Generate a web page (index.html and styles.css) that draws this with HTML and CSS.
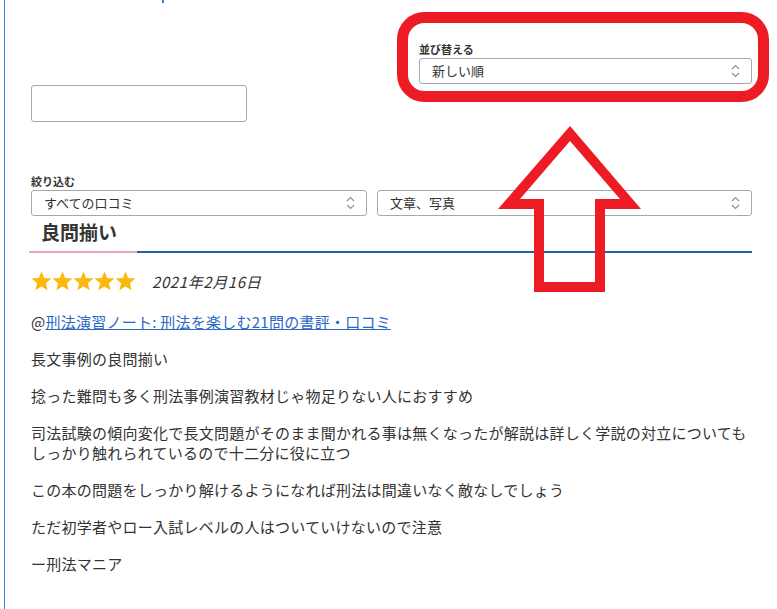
FILE: index.html
```html
<!DOCTYPE html>
<html lang="ja">
<head>
<meta charset="utf-8">
<title>口コミ</title>
<link rel="stylesheet" href="styles.css">
</head>
<body>
<div class="page">
  <span class="top-dot"></span>
  <div class="toolbar">
    <div class="search-col">
      <div class="search-box"></div>
    </div>
    <div class="sort-col">
      <div class="label">並び替える</div>
      <div class="select sort-select">
        <span>新しい順</span>
        <svg class="chev" width="9" height="14" viewBox="0 0 9 14"><path d="M1 5 L4.5 1.5 L8 5 M1 9 L4.5 12.5 L8 9" fill="none" stroke="#8d929c" stroke-width="1.2"/></svg>
      </div>
    </div>
  </div>

  <div class="filter">
    <div class="label">絞り込む</div>
    <div class="filter-row">
      <div class="select">
        <span>すべての口コミ</span>
        <svg class="chev" width="9" height="14" viewBox="0 0 9 14"><path d="M1 5 L4.5 1.5 L8 5 M1 9 L4.5 12.5 L8 9" fill="none" stroke="#8d929c" stroke-width="1.2"/></svg>
      </div>
      <div class="select">
        <span>文章、写真</span>
        <svg class="chev" width="9" height="14" viewBox="0 0 9 14"><path d="M1 5 L4.5 1.5 L8 5 M1 9 L4.5 12.5 L8 9" fill="none" stroke="#8d929c" stroke-width="1.2"/></svg>
      </div>
    </div>
  </div>

  <h2 class="review-title">良問揃い</h2>

  <div class="meta">
    <div class="stars">
      <svg width="21" height="20" viewBox="0 0 24 23"><polygon points="12,0.5 15.1,8.1 23.4,8.7 17,14 19.1,22.2 12,17.7 4.9,22.2 7,14 0.6,8.7 8.9,8.1" fill="#fbb80f"/></svg>
      <svg width="21" height="20" viewBox="0 0 24 23"><polygon points="12,0.5 15.1,8.1 23.4,8.7 17,14 19.1,22.2 12,17.7 4.9,22.2 7,14 0.6,8.7 8.9,8.1" fill="#fbb80f"/></svg>
      <svg width="21" height="20" viewBox="0 0 24 23"><polygon points="12,0.5 15.1,8.1 23.4,8.7 17,14 19.1,22.2 12,17.7 4.9,22.2 7,14 0.6,8.7 8.9,8.1" fill="#fbb80f"/></svg>
      <svg width="21" height="20" viewBox="0 0 24 23"><polygon points="12,0.5 15.1,8.1 23.4,8.7 17,14 19.1,22.2 12,17.7 4.9,22.2 7,14 0.6,8.7 8.9,8.1" fill="#fbb80f"/></svg>
      <svg width="21" height="20" viewBox="0 0 24 23"><polygon points="12,0.5 15.1,8.1 23.4,8.7 17,14 19.1,22.2 12,17.7 4.9,22.2 7,14 0.6,8.7 8.9,8.1" fill="#fbb80f"/></svg>
    </div>
    <span class="date">2021年2月16日</span>
  </div>

  <div class="review-body">
    <p>@<a href="#">刑法演習ノート: 刑法を楽しむ21問の書評・口コミ</a></p>
    <p>長文事例の良問揃い</p>
    <p>捻った難問も多く刑法事例演習教材じゃ物足りない人におすすめ</p>
    <p>司法試験の傾向変化で長文問題がそのまま聞かれる事は無くなったが解説は詳しく学説の対立についてもしっかり触れられているので十二分に役に立つ</p>
    <p>この本の問題をしっかり解けるようになれば刑法は間違いなく敵なしでしょう</p>
    <p>ただ初学者やロー入試レベルの人はついていけないので注意</p>
    <p>ー刑法マニア</p>
  </div>

  <svg class="annotation" width="777" height="609" viewBox="0 0 777 609">
    <rect x="402.5" y="17.5" width="361" height="79" rx="22" ry="22" fill="none" stroke="#ed1c24" stroke-width="11"/>
    <path fill="#ed1c24" fill-rule="evenodd" d="M570 126 L641 209 L605 209 L605 292 L534 292 L534 209 L498 209 Z M570 141 L620 199 L595 199 L595 282 L544 282 L544 199 L520 199 Z"/>
  </svg>
</div>
</body>
</html>
```

FILE: styles.css
```css
* { box-sizing: border-box; }

html, body {
  margin: 0;
  padding: 0;
  background: #ffffff;
}

body {
  font-family: "Noto Sans CJK JP", "Noto Sans", sans-serif;
  color: #333333;
}

.page {
  position: relative;
  margin-left: 4px;
  border-left: 1px solid #3c7ed6;
  min-height: 609px;
  padding: 0 25px 0 26px;
  width: 773px;
}

.top-dot {
  position: absolute;
  left: 157px;
  top: 0;
  width: 2px;
  height: 3px;
  background: #3c7ed6;
}

.toolbar {
  display: flex;
  justify-content: space-between;
  align-items: flex-start;
}

.search-col {
  padding-top: 85px;
}

.search-box {
  width: 216px;
  height: 37px;
  border: 1px solid #a3a8b1;
  border-radius: 3px;
}

.sort-col {
  width: 333px;
  padding-top: 42px;
}

.label {
  font-size: 11px;
  font-weight: bold;
  line-height: 15px;
  height: 16px;
  color: #333;
}

.select {
  display: flex;
  align-items: center;
  justify-content: space-between;
  height: 26px;
  border: 1px solid #a3a8b3;
  border-radius: 3px;
  padding: 0 11px 2px 12px;
  font-size: 13px;
  color: #333;
}

.chev {
  display: block;
  margin-top: 2px;
}

.filter {
  margin-top: 52px;
}

.filter-row {
  display: grid;
  grid-template-columns: 336px 1fr;
  gap: 10px;
}

.review-title {
  margin: 2px 0 0 -2px;
  padding: 0 0 7px 12px;
  font-size: 19px;
  font-weight: bold;
  line-height: 28px;
  color: #333;
  background: linear-gradient(to right, #e9a6b9 0 108px, #2c5ea8 108px) left bottom / 100% 2px no-repeat;
}

.meta {
  display: flex;
  align-items: center;
  gap: 16px;
  margin-top: 17px;
  height: 22px;
}

.stars {
  display: flex;
  gap: 0;
}

.stars svg {
  display: block;
}

.date {
  font-style: italic;
  font-size: 15px;
  letter-spacing: 0.6px;
  color: #333;
}

.review-body {
  margin-top: 20px;
  font-size: 15px;
  letter-spacing: 0.25px;
  line-height: 20px;
}

.review-body p {
  margin: 0 0 17px;
}

.review-body a {
  color: #2a68c8;
  text-decoration: underline;
}

.annotation {
  position: absolute;
  left: -5px;
  top: 0;
  pointer-events: none;
}
```
